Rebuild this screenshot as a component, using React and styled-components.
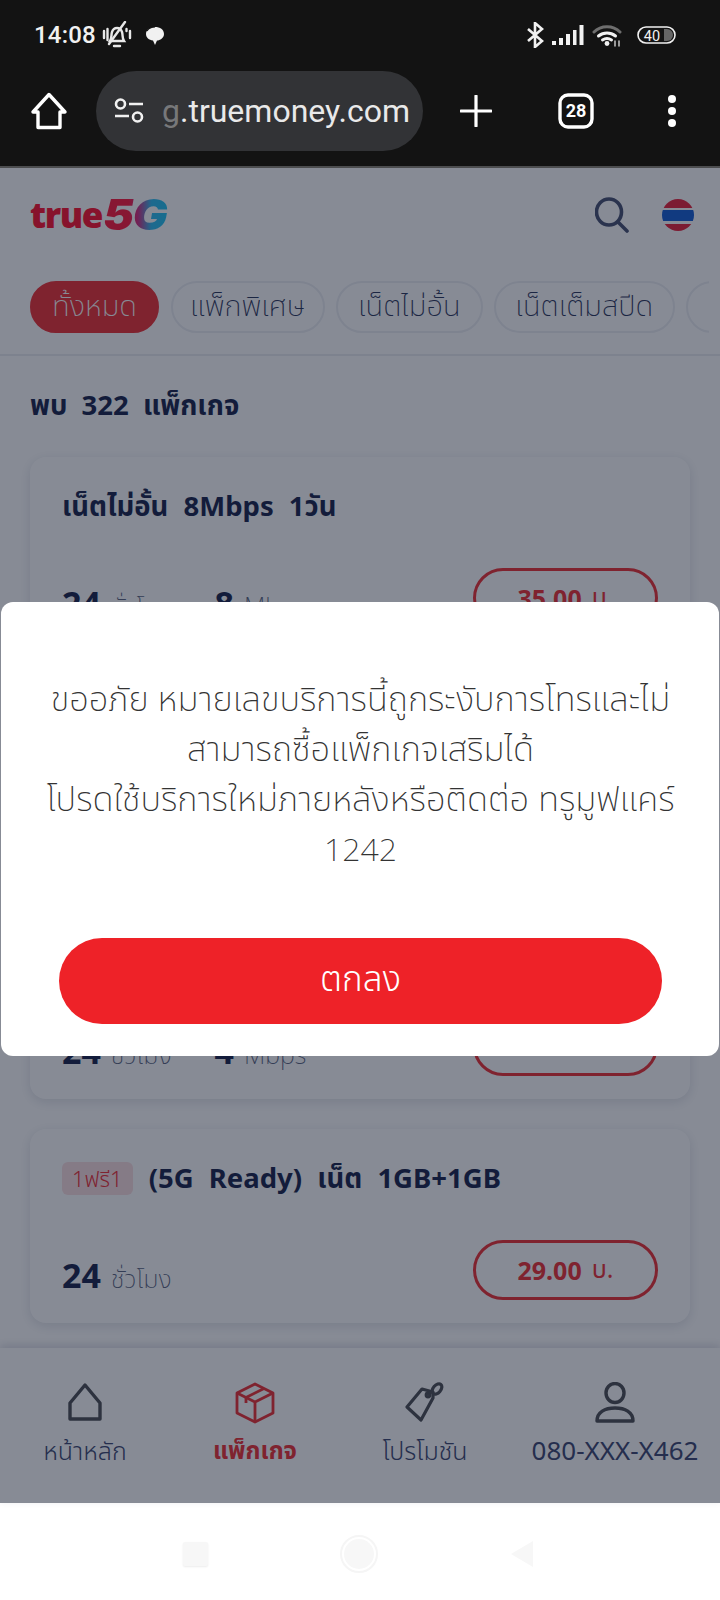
import styled, { createGlobalStyle } from "styled-components"

const Global = createGlobalStyle`
html,body{margin:0;padding:0;background:#fff;}
*{box-sizing:border-box;}
body{font-family:"Noto Sans","Noto Sans Thai","Open Sans",sans-serif;}
`
const Phone = styled.div`
width:720px;height:1600px;display:flex;flex-direction:column;overflow:hidden;
`
const Chrome = styled.div`
height:168px;background:#131313;border-bottom:2px solid #4c4d4f;color:#f1f1f1;flex:none;
display:flex;flex-direction:column;
`
const StatusBar = styled.div`
height:71px;display:flex;align-items:center;justify-content:space-between;padding:0 44px 1px 34px;
`
const StatusGroup = styled.div`
display:flex;align-items:center;gap:${p=>p.$gap||0}px;margin-left:${p=>p.$ml||0}px;
`
const Time = styled.span`
font:500 24px Roboto,sans-serif;letter-spacing:.2px;margin-right:6px;
`
const UrlRow = styled.div`
height:80px;display:flex;align-items:center;padding-left:30px;
`
const HomeSlot = styled.div`
width:66px;display:flex;
`
const UrlPill = styled.div`
width:327px;height:80px;border-radius:40px;background:#323336;display:flex;align-items:center;padding-left:18px;flex:none;overflow:hidden;
`
const UrlText = styled.span`
font:400 32px Roboto,sans-serif;margin-left:18px;white-space:nowrap;color:#e9e9e9;
b{font-weight:400;color:#77787a;}
`
const RowAction = styled.div`
display:flex;justify-content:center;width:${p=>p.$w}px;margin-left:${p=>p.$ml||0}px;
`
const Page = styled.div`
position:relative;height:1335px;flex:none;display:flex;flex-direction:column;background:#fff;color:#0a1440;
`
const Scroll = styled.div`
flex:1;overflow:hidden;
`
const Header = styled.div`
height:94px;display:flex;align-items:center;justify-content:space-between;padding:0 26px 0 30px;
`
const Logo = styled.div`
display:flex;align-items:flex-start;gap:1px;height:32px;margin-top:-1px;
`
const LogoTrue = styled.span`
font:800 35px/32px "Open Sans",sans-serif;letter-spacing:-1.4px;color:#ff0020;
`
const LogoFive = styled.span`
font:italic 900 42px/32px Inter,sans-serif;letter-spacing:-1px;display:inline-block;transform-origin:left center;transform:scaleX(1.1);
background:linear-gradient(90deg,#ff0a30 0%,#ff0a30 38%,#d0207a 52%,#20b8f0 72%,#10c0f0 100%);
-webkit-background-clip:text;background-clip:text;color:transparent;padding-right:3px;
`
const HeadIcons = styled.div`
display:flex;align-items:center;gap:33px;
`
const Flag = styled.div`
width:32px;height:32px;border-radius:50%;
background:linear-gradient(#e8112d 0 27%,#fff 27% 34%,#0653d2 34% 70%,#fff 70% 78%,#e8112d 78%);
`
const ChipRow = styled.div`
margin:19px 11px 0 30px;padding-bottom:21px;display:flex;gap:11.5px;overflow:hidden;
`
const Divider = styled.div`
height:2px;background:#e9ebf0;
`
const Chip = styled.div`
flex:none;height:52px;border-radius:26px;display:flex;align-items:center;justify-content:center;
width:${p=>p.$w}px;font-size:29px;font-weight:200;padding-bottom:1px;
border:2px solid ${p=>p.$active?"#ee2228":"#eceef3"};
background:${p=>p.$active?"#ee2228":"#fff"};
color:${p=>p.$active?"#fff":"#1b2a52"};
white-space:nowrap;
`
const Found = styled.h2`
margin:31px 0 34px 30px;font-size:27.5px;font-weight:700;line-height:36px;word-spacing:7px;color:#0a1440;
`
const List = styled.div`
display:flex;flex-direction:column;gap:30px;padding:0 30px;
`
const Card = styled.div`
height:194px;border-radius:16px;background:#fff;box-shadow:0 3px 12px rgba(30,40,80,.14);
padding:29px 32px 23px;display:flex;flex-direction:column;justify-content:space-between;
`
const Title = styled.div`
display:flex;align-items:center;gap:16px;font-size:27.5px;font-weight:700;line-height:40px;word-spacing:8px;color:#0a1440;
`
const Tag = styled.span`
background:#fbdde0;color:#ee2228;font-size:22px;font-weight:300;line-height:33px;height:33px;padding:0 10px;border-radius:6px;word-spacing:0;
`
const CardRow = styled.div`
display:flex;align-items:center;justify-content:space-between;height:60px;
`
const Specs = styled.div`
display:flex;gap:43px;margin-top:9px;
`
const Spec = styled.div`
display:flex;align-items:baseline;gap:10px;height:40px;
strong{font-size:34px;font-weight:700;line-height:40px;color:#0a1440;}
span{font-size:25px;font-weight:200;line-height:24px;color:#4f5a78;}
`
const Price = styled.div`
width:185px;height:60px;border-radius:30px;border:3px solid #ee2228;display:flex;align-items:center;justify-content:center;gap:10px;
font-size:25px;font-weight:700;color:#ee2228;
span{font-weight:400;}
`
const Nav = styled.div`
height:155px;flex:none;background:#fff;box-shadow:0 -3px 8px rgba(30,40,80,.16);display:grid;grid-template-columns:170px 170px 170px 1fr;padding-top:34px;
`
const NavItem = styled.div`
display:flex;flex-direction:column;align-items:center;gap:8px;color:${p=>p.$active?"#ee2228":"#2f3a68"};
font-size:${p=>p.$size||25}px;font-weight:${p=>p.$weight||300};line-height:36px;white-space:nowrap;
svg{display:block}
`
const Overlay = styled.div`
position:absolute;inset:0;background:rgba(28,36,55,.53);display:flex;align-items:center;justify-content:center;padding-bottom:13px;
`
const Modal = styled.div`
width:718px;height:454px;background:#fff;border-radius:12px;padding:71px 57px 32px 58px;display:flex;flex-direction:column;justify-content:space-between;
`
const Message = styled.p`
margin:0 -20px;text-align:center;font-size:34.5px;font-weight:200;line-height:50px;color:#333;white-space:nowrap;
span{font-size:32px;}
`
const OkButton = styled.button`
height:86px;border:0;border-radius:43px;background:#ee2228;color:#fff;font:300 35px "Noto Sans","Noto Sans Thai",sans-serif;padding:0 0 2px;
`
const SystemBar = styled.div`
flex:1;background:#fff;display:flex;align-items:center;justify-content:center;gap:136px;padding:5px 3px 0 0;
`
const SysSquare = styled.div`
width:25px;height:24px;background:#f7f7f7;border-radius:2px;box-shadow:0 1px 2px rgba(0,0,0,.08);
`
const SysCircle = styled.div`
width:30px;height:30px;border-radius:50%;background:#f7f7f7;outline:2px solid #f5f5f5;outline-offset:2px;
`

const Icons = {
  Home:()=>(<svg width="38" height="38" viewBox="0 0 38 38" fill="none" stroke="#fff" strokeWidth="3.400" strokeLinejoin="round"><path d="M19 2.500 35 20H30V35.500H8V20H3Z"/></svg>),
  Bell:()=>(<svg width="30" height="28" viewBox="0 0 30 28" fill="none" stroke="#e8e8e8" strokeWidth="2.400" strokeLinecap="round"><path d="M8 20c2-3 1-6 2-9 1-3 3-4 5-4s4 1 5 4c1 3 0 6 2 9z"/><path d="M12 25h6"/><path d="M23 1 7 23"/><path d="M2 10v7M5.500 8v11M28 10v7M24.500 8v2"/></svg>),
  Bubble:()=>(<svg width="22" height="22" viewBox="0 0 22 22" fill="#f1f1f1"><path d="M11 3c5 0 9 2.500 9 7 0 4-4 6.500-7 6.500L11 21l-2-4.500C5 16 2 13.500 2 10c0-4 4-7 9-7z"/><path d="M3 7c2-3 5-4 8-4" stroke="#131313" strokeWidth="1.200" fill="none"/></svg>),
  Bluetooth:()=>(<svg width="18" height="26" viewBox="0 0 18 26" fill="none" stroke="#f1f1f1" strokeWidth="2.600"><path d="M2 7l14 12-7 6V1l7 6L2 19"/></svg>),
  Signal:()=>(<svg width="32" height="20" viewBox="0 0 32 20" fill="#f1f1f1"><rect x="0" y="16" width="4" height="4"/><rect x="7" y="13" width="4" height="7"/><rect x="14" y="9" width="4" height="11"/><rect x="21" y="5" width="3.500" height="15"/><rect x="27.500" y="0" width="4" height="20"/></svg>),
  Wifi:()=>(<svg width="30" height="24" viewBox="0 0 30 24" fill="none" strokeWidth="3" strokeLinecap="round"><path d="M2 9c7-7 19-7 26 0" stroke="#6e6e6e"/><path d="M6.500 13c5-4 12-4 17 0M10.500 17c3-2 6-2 9 0" stroke="#f1f1f1"/><circle cx="15" cy="20.500" r="2.400" fill="#f1f1f1" stroke="none"/><path d="M23 18v5M27 18v5" stroke="#bbb" strokeWidth="1.600"/></svg>),
  Battery:()=>(<svg width="39" height="18" viewBox="0 0 39 18"><rect x="1" y="1" width="37" height="16" rx="8" fill="none" stroke="#f1f1f1" strokeWidth="1.600"/><path d="M27 3h3a6 6 0 0 1 0 12h-3z" fill="#666"/><text x="15" y="14.500" textAnchor="middle" fontSize="14.500" fontFamily="Roboto" fontWeight="400" fill="#f1f1f1">40</text></svg>),
  Tune:()=>(<svg width="30" height="26" viewBox="0 0 30 26" fill="none" stroke="#f1f1f1" strokeWidth="2.600"><circle cx="6.500" cy="6" r="4.500"/><path d="M15 6h14M1 18h14"/><circle cx="23.500" cy="19" r="4.500"/></svg>),
  Plus:()=>(<svg width="32" height="32" viewBox="0 0 32 32" stroke="#fff" strokeWidth="3.200" strokeLinecap="round"><path d="M16 1v30M1 16h30"/></svg>),
  Tabs:()=>(<svg width="36" height="36" viewBox="0 0 36 36"><rect x="2" y="2" width="32" height="32" rx="8" fill="none" stroke="#fff" strokeWidth="3.400"/><text x="18" y="24" textAnchor="middle" fontSize="18" fontWeight="700" fontFamily="Roboto" fill="#fff">28</text></svg>),
  Dots:()=>(<svg width="10" height="32" viewBox="0 0 10 32" fill="#fff"><circle cx="5" cy="4" r="4"/><circle cx="5" cy="16" r="4"/><circle cx="5" cy="28" r="4"/></svg>),
  Search:()=>(<svg width="34" height="36" viewBox="0 0 34 36" fill="none" stroke="#3a4468" strokeWidth="3.600" strokeLinecap="round"><ellipse cx="14" cy="15" rx="12.500" ry="13"/><path d="M23 25l9 9"/></svg>),
  NavHome:()=>(<svg width="36" height="42" viewBox="0 0 36 42" fill="none" stroke="#404348" strokeWidth="3.400" strokeLinejoin="round"><path d="M18 3 33 21V37H3V21Z"/></svg>),
  Box:()=>(<svg width="40" height="42" viewBox="0 0 40 42" fill="none" stroke="#ee2228" strokeWidth="2.800" strokeLinejoin="round"><path d="M20 2 38 11V31L20 40 2 31V11Z"/><path d="M2 11l18 9 18-9M20 20v20"/><path d="M29 6.500 11 15.500V21"/></svg>),
  Tag:()=>(<svg width="40" height="42" viewBox="0 0 40 42" fill="none" stroke="#404348" strokeWidth="3.200" strokeLinejoin="round"><path d="M2 25 17 7 28 10 28 16 16 38Z"/><circle cx="23" cy="13" r="1.800"/><ellipse cx="32" cy="7" rx="3.800" ry="6" transform="rotate(40 32 7)"/></svg>),
  User:()=>(<svg width="40" height="42" viewBox="0 0 40 42" fill="none" stroke="#404348" strokeWidth="3.400" strokeLinejoin="round"><ellipse cx="20" cy="11" rx="9" ry="9.500"/><path d="M2 39c0-9 8-13 18-13s18 4 18 13z"/></svg>),
  Back:()=>(<svg width="24" height="28" viewBox="0 0 24 28"><path d="M23 1v26L1 14z" fill="#f7f7f7"/></svg>),
}

const plans = [
  {title:"เน็ตไม่อั้น 8Mbps 1วัน",hours:"24",speed:"8",price:"35.00"},
  {title:"เน็ตไม่อั้น 6Mbps 1วัน",hours:"24",speed:"6",price:"32.00"},
  {title:"เน็ตไม่อั้น 4Mbps 1วัน",hours:"24",speed:"4",price:"25.00"},
  {title:"(5G Ready) เน็ต 1GB+1GB",tag:"1ฟรี1",hours:"24",price:"29.00"},
]
const chips = [["ทั้งหมด",129,true],["แพ็กพิเศษ",154],["เน็ตไม่อั้น",146.500],["เน็ตเต็มสปีด",180.500],["",100]]

export default function App(){
  return(
    <Phone lang="th">
      <Global/>
      <Chrome>
        <StatusBar>
          <StatusGroup $gap={12}>
            <StatusGroup><Time>14:08</Time><Icons.Bell/></StatusGroup>
            <Icons.Bubble/>
          </StatusGroup>
          <StatusGroup $gap={8}>
            <Icons.Bluetooth/><Icons.Signal/><Icons.Wifi/><StatusGroup $ml={7}><Icons.Battery/></StatusGroup>
          </StatusGroup>
        </StatusBar>
        <UrlRow>
          <HomeSlot><Icons.Home/></HomeSlot>
          <UrlPill><Icons.Tune/><UrlText><b>g</b>.truemoney.com</UrlText></UrlPill>
          <RowAction $w={32} $ml={37}><Icons.Plus/></RowAction>
          <RowAction $w={36} $ml={66}><Icons.Tabs/></RowAction>
          <RowAction $w={10} $ml={73}><Icons.Dots/></RowAction>
        </UrlRow>
      </Chrome>
      <Page>
        <Scroll>
          <Header>
            <Logo><LogoTrue>true</LogoTrue><LogoFive>5G</LogoFive></Logo>
            <HeadIcons><Icons.Search/><Flag/></HeadIcons>
          </Header>
          <ChipRow>
            {chips.map(([t,w,a],i)=><Chip key={i} $w={w} $active={a}>{t}</Chip>)}
          </ChipRow>
          <Divider/>
          <Found>พบ 322 แพ็กเกจ</Found>
          <List>
            {plans.map(p=>(
              <Card key={p.title}>
                <Title>{p.tag&&<Tag>{p.tag}</Tag>}<span>{p.title}</span></Title>
                <CardRow>
                  <Specs>
                    <Spec><strong>{p.hours}</strong><span>ชั่วโมง</span></Spec>
                    {p.speed&&<Spec><strong>{p.speed}</strong><span>Mbps</span></Spec>}
                  </Specs>
                  <Price>{p.price}<span>บ.</span></Price>
                </CardRow>
              </Card>
            ))}
          </List>
        </Scroll>
        <Nav>
          <NavItem><Icons.NavHome/>หน้าหลัก</NavItem>
          <NavItem $active $weight={700} $size={24}><Icons.Box/>แพ็กเกจ</NavItem>
          <NavItem><Icons.Tag/>โปรโมชัน</NavItem>
          <NavItem $size={26} $weight={400}><Icons.User/>080-XXX-X462</NavItem>
        </Nav>
        <Overlay>
          <Modal>
            <Message>ขออภัย หมายเลขบริการนี้ถูกระงับการโทรและไม่<br/>สามารถซื้อแพ็กเกจเสริมได้<br/>โปรดใช้บริการใหม่ภายหลังหรือติดต่อ ทรูมูฟแคร์<br/><span>1242</span></Message>
            <OkButton>ตกลง</OkButton>
          </Modal>
        </Overlay>
      </Page>
      <SystemBar>
        <SysSquare/><SysCircle/><Icons.Back/>
      </SystemBar>
    </Phone>
  )
}
